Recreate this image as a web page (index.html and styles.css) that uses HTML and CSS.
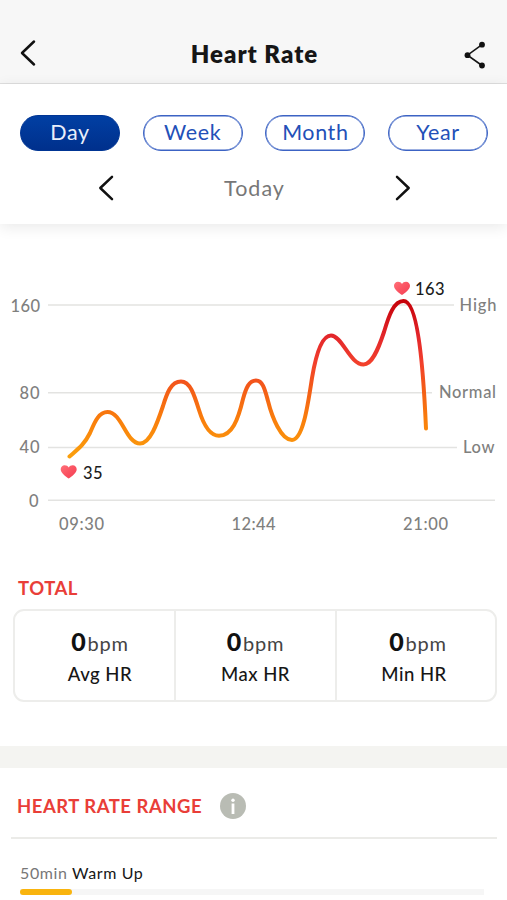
FILE: index.html
```html
<!DOCTYPE html>
<html lang="en">
<head>
<meta charset="utf-8">
<title>Heart Rate</title>
<link rel="stylesheet" href="styles.css">
</head>
<body>
<header class="topbar">
  <svg class="back" width="16" height="28" viewBox="0 0 16 28"><path d="M14 2.500 2 14l12 11.500"/></svg>
  <h1>Heart Rate</h1>
  <svg class="share" width="24" height="30" viewBox="0 0 24 30"><path d="M19 4.700 4.500 15.200 19 25.500"/><circle cx="19" cy="4.700" r="2.900"/><circle cx="4.500" cy="15.200" r="2.900"/><circle cx="19" cy="25.500" r="2.900"/></svg>
</header>
<section class="period">
  <nav class="tabs">
    <a class="tab active">Day</a>
    <a class="tab">Week</a>
    <a class="tab">Month</a>
    <a class="tab">Year</a>
  </nav>
  <div class="date">
    <svg width="16" height="26" viewBox="0 0 16 26"><path d="M14 1.800 2.300 13 14 24.200"/></svg>
    <span>Today</span>
    <svg width="16" height="26" viewBox="0 0 16 26"><path d="M2 1.800 13.700 13 2 24.200"/></svg>
  </div>
</section>
<svg class="chart" width="507" height="310" viewBox="0 240 507 310">
  <defs>
    <linearGradient id="rate" gradientUnits="userSpaceOnUse" x1="0" y1="300" x2="0" y2="458">
      <stop offset="0" stop-color="#c50008"/><stop offset=".23" stop-color="#e3272b"/><stop offset=".4" stop-color="#f2402c"/><stop offset=".55" stop-color="#f35a18"/><stop offset=".75" stop-color="#f97d0c"/><stop offset="1" stop-color="#fba00c"/>
    </linearGradient>
    <linearGradient id="heart" x1="0" y1="0" x2="1" y2="1"><stop offset="0" stop-color="#ff7079"/><stop offset=".5" stop-color="#fa5362"/><stop offset="1" stop-color="#f43f54"/></linearGradient>
    <path id="heart-shape" d="M8 13.500C5 11.300 0 8 0 4.200 0 1.900 1.700.2 4 .2c1.700 0 3.200.9 4 2.300C8.800 1.100 10.300.2 12 .2c2.300 0 4 1.700 4 4 0 3.800-5 7.100-8 9.300z"/>
  </defs>
  <g class="grid"><path d="M48 305H454M48 392.800H432M48 447.500H457M48 500.300H495"/></g>
  <g class="axis">
    <text x="10.500" y="311.500" textLength="29.500">160</text>
    <text x="19.500" y="399" textLength="20">80</text>
    <text x="19.500" y="453" textLength="20">40</text>
    <text x="29" y="507">0</text>
    <text x="459.500" y="310.500" textLength="37">High</text>
    <text x="439" y="398" textLength="57">Normal</text>
    <text x="463" y="453" textLength="31.500">Low</text>
    <text x="59" y="530" textLength="45">09:30</text>
    <text x="231.500" y="530" textLength="44">12:44</text>
    <text x="403" y="530" textLength="45">21:00</text>
  </g>
  <path class="line" d="M69.500 456.500C78 449 84 445 90 433C94 424 98 412 107.500 412C122 412 126 443.500 140 443.500C150 443.500 157 424 163 406C167 393 171 381.500 181 381.500C190 381.500 194 394 199 410C203 423 209 435.800 219 435.800C232 435.800 238 420 243 399C246 388 249 380.500 256 380.500C263 380.500 265 390 268 401C272 417 281 440 292 440C303 440 308 404 312 378C316 354 322 335.500 331 335.500C342 335.500 350 364.500 363.500 364.500C372 364.500 378 350 384 332C389 315 394 301 403.500 301C417 301 423 360 426 428.500"/>
  <use href="#heart-shape" x="60.700" y="465" fill="url(#heart)"/>
  <use href="#heart-shape" x="394" y="281.500" fill="url(#heart)"/>
  <g class="mark"><text x="83" y="478.700" textLength="19.500">35</text><text x="415" y="294.500" textLength="29.500">163</text></g>
</svg>
<section class="total">
  <h2>TOTAL</h2>
  <div class="stats">
    <div class="stat avg"><p><b>0</b><span>bpm</span></p><label>Avg HR</label></div>
    <div class="stat"><p><b>0</b><span>bpm</span></p><label>Max HR</label></div>
    <div class="stat min"><p><b>0</b><span>bpm</span></p><label>Min HR</label></div>
  </div>
</section>
<section class="range">
  <div class="range-head">
    <h2>HEART RATE RANGE</h2>
    <svg width="26" height="26" viewBox="0 0 26 26"><circle cx="13" cy="13" r="13" fill="#b9bcb4"/><circle cx="13" cy="7.200" r="1.700" fill="#fff"/><path d="M11.600 10.500h2.800v10.500h-2.800z" fill="#fff"/></svg>
  </div>
  <div class="zone">
    <p><span>50min</span> Warm Up</p>
    <div class="track"><div class="fill"></div></div>
  </div>
</section>
</body>
</html>
```
FILE: styles.css
```css
* { box-sizing: border-box; margin: 0; padding: 0; }
body { width: 507px; height: 900px; overflow: hidden; background: #fff; color: #161616; font-family: Lato, "Liberation Sans", sans-serif; font-size: 16px; }
svg { display: block; flex: none; }
.topbar { height: 84px; padding: 24px 20px 0 20px; background: #f7f7f7; border-bottom: 1.5px solid #dfdfdf; display: flex; justify-content: space-between; align-items: center; }
.topbar h1 { font-size: 24px; font-weight: 800; letter-spacing: 1px; line-height: 30px; padding-left: 10px; }
.back { margin-bottom: 1px; }
.share { margin-top: 2px; }
.back path, .date path { fill: none; stroke: #111; stroke-width: 2.5; stroke-linecap: round; stroke-linejoin: round; }
.share path { fill: none; stroke: #161616; stroke-width: 1.6; }
.share circle { fill: #111; }
.period { height: 140px; padding: 31px 19px 0 20px; background: #fff; box-shadow: 0 3px 14px rgba(0, 0, 0, .09); }
.tabs { display: flex; justify-content: space-between; }
.tab { width: 100px; height: 36px; border: 1px solid #3c63c4; border-radius: 18px; color: #2350b8; font-size: 21.5px; line-height: 33px; text-align: center; letter-spacing: .6px; box-shadow: inset 0 0 0 .5px #3c63c4; }
.tab.active { background: linear-gradient(#013fa3, #00308c); border-color: #003594; color: #e9effb; box-shadow: none; }
.date { display: flex; align-items: center; justify-content: space-between; margin: 24px 77px 0 78px; color: #777; font-size: 21.5px; line-height: 26px; letter-spacing: 1px; }
.chart { margin-top: 16px; }
.grid path { fill: none; stroke: #e3e3e1; stroke-width: 1.6; }
.axis { fill: #80807e; font-size: 16.5px; font-weight: 500; }
.mark { fill: #1b1b1b; font-size: 16.5px; font-weight: 500; }
.line { fill: none; stroke: url(#rate); stroke-width: 4; stroke-linecap: round; stroke-linejoin: round; }
.total { height: 196px; padding: 24px 10px 0 13px; }
h2 { color: #e93e38; font-size: 18.5px; font-weight: 700; line-height: 28px; letter-spacing: .5px; }
.total h2 { padding-left: 5px; }
.stats { margin-top: 7px; height: 93px; display: grid; grid-template-columns: 159px 161px 160px; border: 2px solid #ededeb; border-radius: 11px; }
.stat { padding-top: 15px; text-align: center; }
.stat.avg { padding-left: 11px; }
.stat + .stat { border-left: 2px solid #ededeb; }
.stat.min { padding-left: 4px; }
.stat p { line-height: 30px; color: #444; font-size: 20px; letter-spacing: .8px; }
.stat b { font-size: 25px; font-weight: 900; color: #111; }
.stat span { margin-left: 1px; }
.stat label { display: block; margin-top: -1px; font-size: 18.5px; font-weight: 500; line-height: 34px; letter-spacing: .5px; }
.stat.min label { padding-right: 8px; }
.range { border-top: 22px solid #f4f4f1; }
.range-head { height: 71px; margin: 0 10px 0 11px; padding: 6px 0 0 6px; border-bottom: 2px solid #ebebe8; display: flex; align-items: center; gap: 18px; }
.zone { padding: 22px 23px 0 20px; }
.zone p { line-height: 24px; letter-spacing: .6px; }
.zone span { color: #777; }
.track { margin-top: 4px; height: 6px; background: #f6f6f6; }
.fill { width: 52px; height: 6px; border-radius: 3px; background: #f9b40e; }
```
